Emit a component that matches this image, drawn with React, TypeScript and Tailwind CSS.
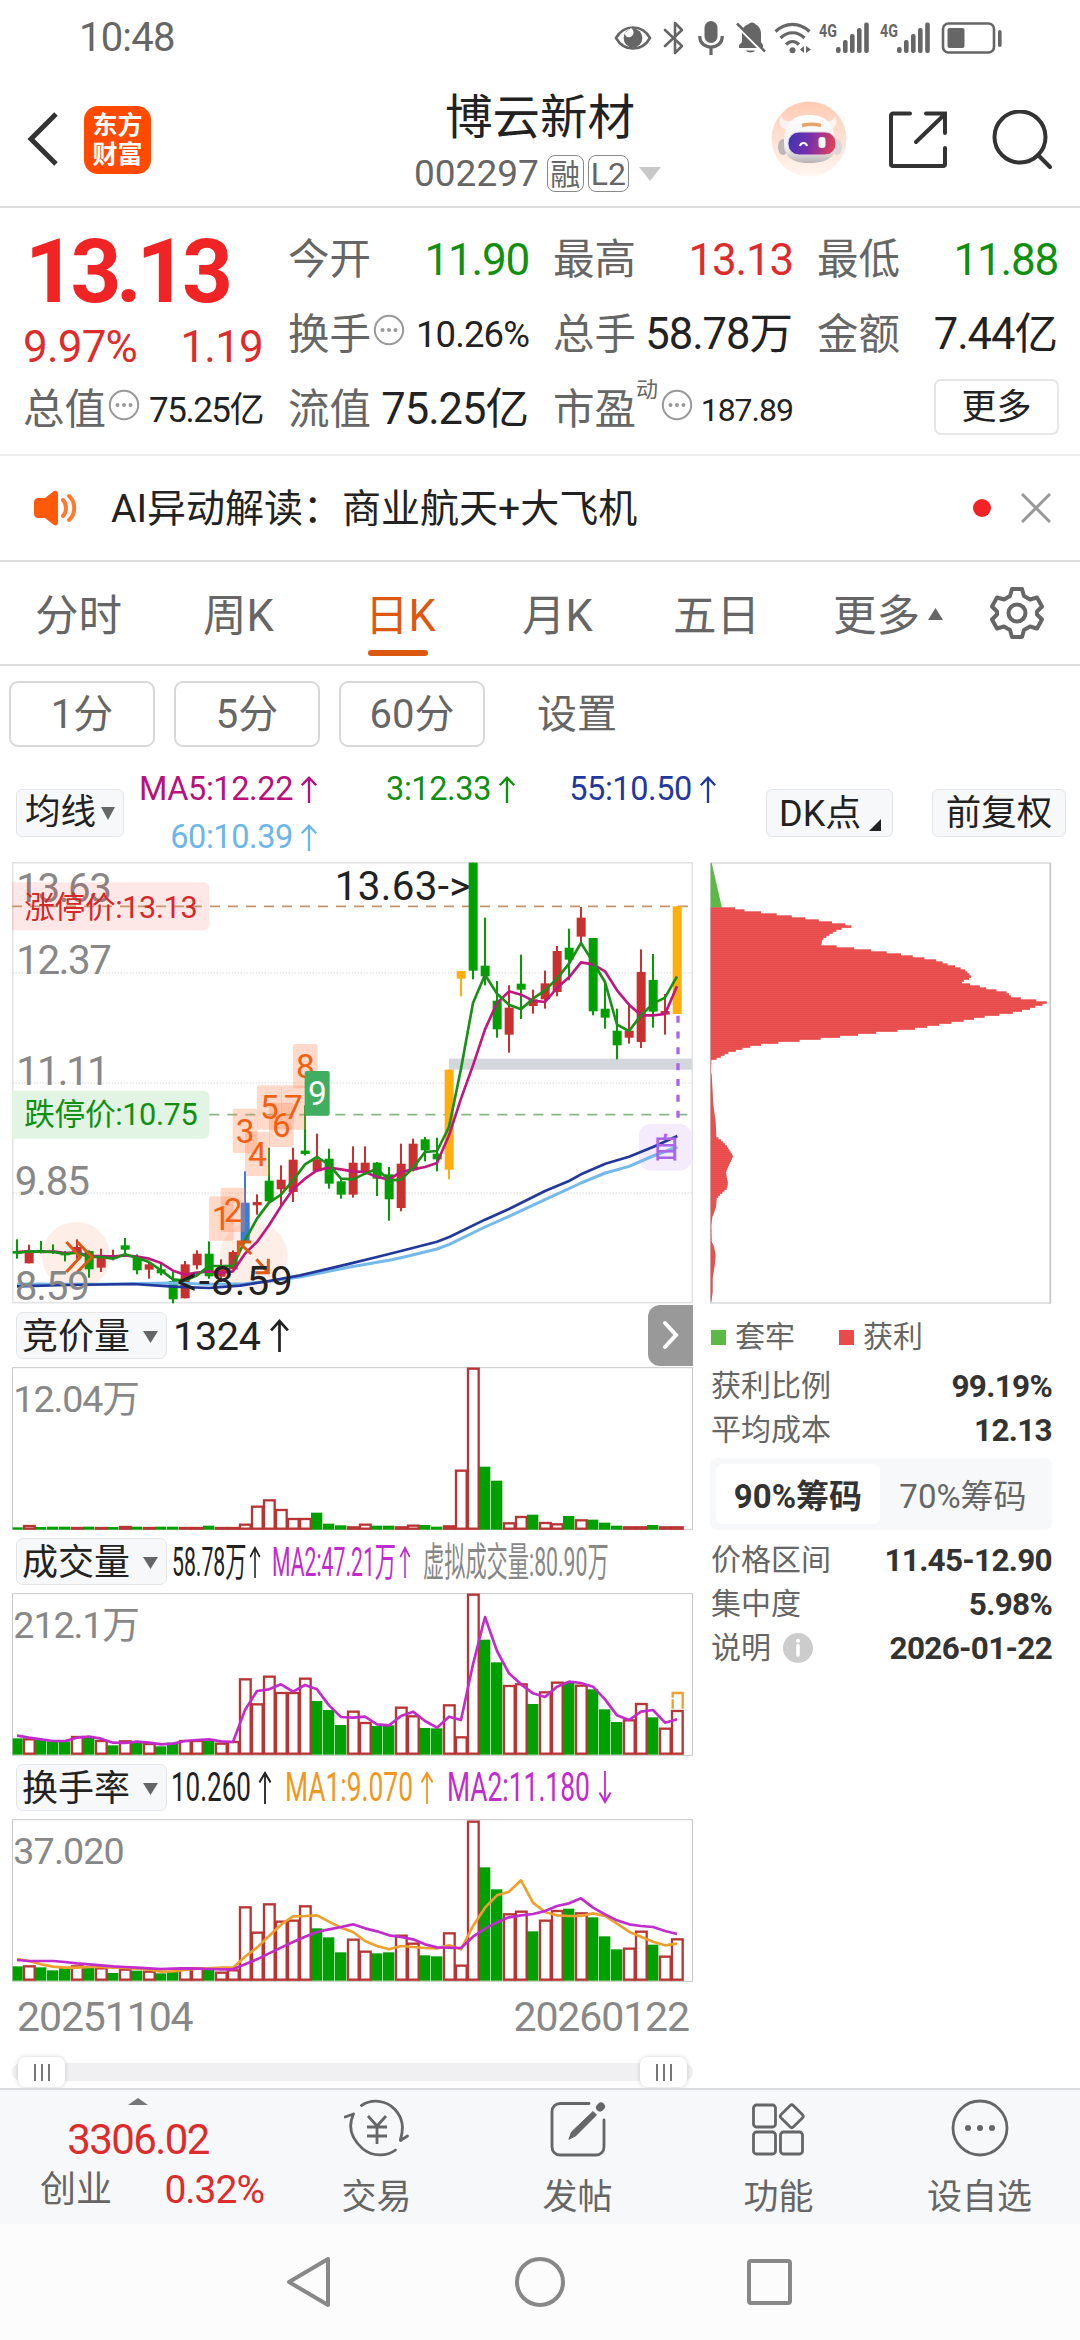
import { FC, ReactNode } from 'react'

import clsx from 'clsx'

// chart geometry is kept in thirds of a pixel, one candle every 36 units
const STEP = 36
const FIRST = 51
const cx = (i: number) => FIRST + i * STEP

const RED = '#c93030'
const GREEN = '#00a000'

type Candle = [kind: string, high: number, top: number, bottom: number, low: number]

const candles: Candle[] = [
  ['g', 1172, 1207, 1215, 1230],
  ['r', 1188, 1207, 1244, 1244],
  ['g', 1177, 1204, 1212, 1214],
  ['g', 1187, 1207, 1212, 1216],
  ['g', 1207, 1212, 1220, 1238],
  ['r', 1172, 1195, 1212, 1230],
  ['g', 1205, 1207, 1262, 1287],
  ['r', 1200, 1225, 1257, 1270],
  ['r', 1203, 1219, 1230, 1235],
  ['g', 1168, 1190, 1203, 1217],
  ['g', 1217, 1222, 1265, 1277],
  ['r', 1240, 1247, 1263, 1290],
  ['g', 1245, 1262, 1274, 1280],
  ['g', 1270, 1297, 1352, 1364],
  ['r', 1237, 1247, 1349, 1349],
  ['r', 1205, 1215, 1250, 1262],
  ['g', 1178, 1215, 1283, 1290],
  ['r', 1232, 1260, 1284, 1300],
  ['r', 1205, 1210, 1262, 1262],
  ['b', 968, 1062, 1180, 1180],
  ['r', 1037, 1060, 1070, 1098],
  ['g', 897, 996, 1058, 1060],
  ['r', 950, 993, 1022, 1073],
  ['r', 897, 933, 1030, 1060],
  ['g', 770, 906, 916, 920],
  ['r', 855, 933, 968, 970],
  ['g', 900, 930, 1005, 1020],
  ['g', 990, 998, 1038, 1050],
  ['r', 893, 942, 1038, 1047],
  ['r', 893, 942, 970, 975],
  ['g', 940, 942, 990, 1042],
  ['g', 955, 977, 1052, 1116],
  ['r', 885, 945, 1078, 1088],
  ['r', 870, 885, 965, 968],
  ['g', 865, 872, 905, 938],
  ['g', 867, 915, 932, 968],
  ['o', 663, 663, 963, 992],
  ['o', 367, 367, 390, 443],
  ['g', 42, 42, 366, 392],
  ['g', 207, 351, 383, 410],
  ['g', 397, 456, 542, 567],
  ['r', 410, 477, 558, 612],
  ['g', 318, 405, 423, 511],
  ['r', 423, 452, 472, 495],
  ['r', 366, 404, 452, 480],
  ['r', 292, 307, 430, 443],
  ['g', 240, 297, 333, 395],
  ['r', 175, 207, 264, 285],
  ['g', 268, 268, 488, 500],
  ['g', 400, 480, 507, 540],
  ['g', 480, 546, 590, 632],
  ['r', 465, 546, 567, 585],
  ['r', 302, 370, 580, 598],
  ['g', 316, 394, 489, 537],
  ['r', 436, 487, 498, 558],
  ['o', 173, 173, 496, 496],
]

const candleColor: Record<string, string> = { g: GREEN, r: RED, b: '#3a7bd5', o: '#ffae0d' }

const ma5 = [
  1210, 1207, 1210, 1208, 1213, 1211, 1222, 1222, 1224, 1220, 1224, 1230, 1243, 1266, 1278, 1272, 1268, 1273, 1268, 1215, 1180, 1130, 1073, 1022, 990,
  965, 957, 962, 968, 970, 985, 992, 970, 962, 955, 943, 860, 750, 650, 542, 463, 428, 438, 456, 460, 418, 386, 341, 347, 368, 425, 468, 500, 500, 496,
  413,
]
const ma3 = [
  1213, 1208, 1209, 1210, 1216, 1212, 1225, 1225, 1230, 1217, 1228, 1240, 1265, 1292, 1296, 1280, 1252, 1252, 1252, 1175, 1110, 1062, 1038, 995, 947,
  925, 948, 990, 992, 975, 960, 995, 993, 958, 910, 907, 835, 660, 463, 378, 435, 468, 482, 450, 425, 390, 345, 283, 340, 400, 528, 547, 500, 465, 447,
  383,
]
const ma55 =
  '51,1313 200,1309 400,1306 519,1314 627,1318 720,1311 807,1297 900,1280 987,1260 1050,1245 1131,1225 1203,1207 1311,1179 1348,1165 1455,1113 1527,1081 1635,1027 1707,997 1743,977 1816,945 1887,924 1959,895 2032,862'
const ma60 =
  '51,1306 303,1307 519,1303 627,1307 735,1305 807,1298 900,1285 1050,1255 1167,1235 1203,1227 1311,1201 1348,1187 1455,1135 1527,1103 1635,1053 1743,1003 1816,973 1887,953 1959,922 2032,895'

const kinds = 'grgggrgrgrgrggrrgrrrrrrrrgggrrggrrggrrrggrrgrrgrgggrrgrr'

const auction = [
  684, 677, 683, 682, 682, 683, 682, 683, 683, 680, 682, 683, 682, 682, 683, 683, 679, 683, 683, 673, 619, 600, 629, 656, 656, 640, 673, 678, 681, 673,
  679, 679, 681, 676, 677, 682, 678, 511, 205, 502, 544, 669, 650, 646, 668, 672, 650, 660, 661, 670, 679, 681, 681, 677, 681, 681,
]
const volume = [
  1317, 1317, 1320, 1326, 1326, 1310, 1314, 1322, 1338, 1323, 1329, 1331, 1341, 1330, 1322, 1322, 1322, 1330, 1325, 1137, 1212, 1129, 1178, 1178, 1135,
  1205, 1232, 1277, 1234, 1268, 1280, 1278, 1222, 1248, 1286, 1287, 1215, 1311, 883, 1021, 1089, 1157, 1152, 1214, 1176, 1147, 1148, 1156, 1170, 1230,
  1268, 1260, 1211, 1254, 1285, 1232,
]
const volumeMa2 = [
  1309, 1315, 1320, 1325, 1325, 1315, 1312, 1318, 1330, 1331, 1327, 1330, 1335, 1333, 1325, 1322, 1320, 1326, 1328, 1232, 1175, 1170, 1155, 1177, 1157,
  1170, 1218, 1253, 1255, 1252, 1275, 1278, 1250, 1237, 1265, 1285, 1252, 1262, 1095, 953, 1055, 1122, 1155, 1182, 1193, 1162, 1147, 1151, 1162, 1200,
  1248, 1262, 1237, 1232, 1270, 1260,
]
const turnover = [
  651, 648, 654, 663, 656, 648, 652, 654, 671, 658, 664, 664, 672, 667, 654, 654, 655, 667, 660, 471, 547, 462, 514, 511, 468, 537, 564, 609, 568, 604,
  612, 609, 556, 580, 618, 621, 549, 646, 214, 354, 420, 492, 484, 546, 511, 482, 478, 489, 504, 561, 600, 595, 544, 586, 619, 567,
]
const turnoverMa1 = [
  629, 635, 645, 652, 655, 655, 653, 653, 655, 656, 658, 660, 667, 666, 662, 658, 657, 655, 655, 622, 595, 560, 526, 501, 500, 498, 517, 535, 548, 575,
  590, 600, 590, 593, 596, 597, 588, 600, 530, 475, 438, 427, 393, 460, 488, 498, 500, 500, 492, 500, 523, 547, 562, 577, 588, 583,
]
const turnoverMa2 = [
  632, 635, 635, 635, 638, 642, 645, 648, 651, 653, 655, 657, 659, 658, 657, 658, 659, 660, 660, 645, 630, 612, 595, 578, 562, 548, 540, 533, 525, 537,
  546, 558, 563, 570, 585, 594, 595, 596, 562, 538, 519, 504, 498, 494, 485, 470, 462, 447, 475, 495, 513, 525, 530, 533, 545, 554,
]

// [y, x] outline of the cost distribution
const chips = [
  [176, 95], [180, 135], [188, 173], [192, 213], [197, 252], [202, 292], [208, 332], [214, 373], [220, 413], [226, 452], [232, 494], [241, 450],
  [248, 435], [260, 415], [272, 397], [288, 394], [292, 425], [298, 470], [302, 515], [309, 565], [315, 615], [320, 645], [326, 680], [332, 715],
  [338, 750], [346, 765], [354, 795], [364, 823], [374, 835], [384, 843], [392, 835], [400, 808], [405, 828], [410, 848], [416, 880], [424, 897],
  [428, 942], [436, 957], [442, 957], [448, 975], [452, 1010], [457, 1046], [464, 1080], [470, 1046], [480, 1020], [490, 980], [496, 945], [502, 895],
  [508, 862], [515, 827], [520, 797], [526, 760], [532, 723], [538, 687], [544, 650], [548, 595], [554, 540], [560, 486], [566, 432], [572, 372],
  [577, 318], [582, 265], [588, 213], [596, 170], [604, 145], [612, 115], [620, 100], [628, 85], [636, 64], [670, 63], [680, 65], [770, 70],
  [820, 77], [865, 79], [880, 98], [895, 112], [923, 129], [945, 119], [970, 108], [985, 110], [1005, 114], [1020, 110], [1040, 88], [1050, 80],
  [1075, 78], [1105, 67], [1130, 64], [1180, 65], [1195, 72], [1220, 77], [1250, 74], [1290, 68], [1330, 68], [1360, 64],
]

const toPoints = (values: number[]) => values.map((v, i) => `${cx(i)},${v}`).join(' ')

const marks = [
  { n: '1', x: 627, y: 1043 },
  { n: '2', x: 662, y: 1017 },
  { n: '3', x: 698, y: 780 },
  { n: '4', x: 735, y: 849 },
  { n: '5', x: 771, y: 710 },
  { n: '6', x: 807, y: 762 },
  { n: '7', x: 843, y: 710 },
  { n: '8', x: 879, y: 586 },
]

const Arrow: FC<{ className?: string; down?: boolean }> = ({ className, down }) => (
  <svg viewBox="0 0 20 32" preserveAspectRatio="none" className={clsx('shrink-0', down && 'rotate-180', className)} fill="none" stroke="currentColor" strokeWidth="2.6">
    <path d="M10 32V2M2 11l8-9 8 9" />
  </svg>
)

const Caret: FC<{ className?: string }> = ({ className }) => (
  <svg viewBox="0 0 16 13" preserveAspectRatio="none" className={clsx('shrink-0 fill-current', className)}>
    <path d="M0 0h16L8 13z" />
  </svg>
)

const More: FC<{ className?: string }> = ({ className }) => (
  <svg viewBox="0 0 32 32" className={clsx('h-8 w-8 shrink-0 text-[#999]', className)}>
    <circle cx="16" cy="16" r="14.2" fill="none" stroke="currentColor" strokeWidth="2" />
    <circle cx="9.5" cy="16" r="2" fill="currentColor" />
    <circle cx="16" cy="16" r="2" fill="currentColor" />
    <circle cx="22.5" cy="16" r="2" fill="currentColor" />
  </svg>
)

const Signal: FC = () => (
  <div className="flex text-[#666]">
    <span className="w-[17px] origin-left scale-x-75 text-[19px] leading-none font-bold">4G</span>
    <svg viewBox="0 0 33 32" className="mt-px h-8 w-[33px] fill-current">
      <rect x="0" y="25" width="4.6" height="6" rx="2" />
      <rect x="7" y="18" width="4.6" height="13" rx="2" />
      <rect x="14" y="12" width="4.6" height="19" rx="2" />
      <rect x="21" y="6" width="4.6" height="25" rx="2" />
      <rect x="28.2" y="0.5" width="4.6" height="30.5" rx="2" />
    </svg>
  </div>
)

const StatusBar: FC = () => (
  <div className="flex h-[76px] items-center pl-[79px] text-[#666]">
    <span className="w-[535px] text-[40px] tracking-[-0.8px]">10:48</span>
    <svg viewBox="0 0 38 26" className="h-[26px] w-[38px]">
      <path d="M2 13C10-1 28-1 36 13 28 27 10 27 2 13z" fill="none" stroke="currentColor" strokeWidth="2.6" />
      <circle cx="19" cy="13" r="9.4" fill="currentColor" />
      <path d="M17 3c4 3 3 8-1 9s-5-2-5-4" fill="#fff" />
    </svg>
    <svg viewBox="0 0 22 34" className="ml-[11px] h-[34px] w-[22px]" fill="none" stroke="currentColor" strokeWidth="2.6" strokeLinejoin="round" strokeLinecap="round">
      <path d="M2 9l17 16-7 7V2l7 7L2 25" />
    </svg>
    <svg viewBox="0 0 26 34" className="ml-[13px] h-[34px] w-[26px]">
      <rect x="6.5" y="0" width="13" height="22" rx="6.5" fill="currentColor" />
      <path d="M1.8 15v1c0 6 5 10 11.2 10s11.2-4 11.2-10v-1M13 26v8" fill="none" stroke="currentColor" strokeWidth="3.2" />
    </svg>
    <svg viewBox="0 0 30 32" className="ml-[12px] h-[32px] w-[30px]">
      <path d="M3 26V23l3-3v-9C6 6 9 3 13 2c1-2 5-2 6 0 4 2 6 5 6 10v8l2 3v3z" fill="currentColor" />
      <path d="M10 28.5h9c-1 2.5-8 2.5-9 0z" fill="currentColor" />
      <path d="M-1 1.5L28 31" stroke="#fff" strokeWidth="3" />
      <path d="M1 1.5L29 29.5" stroke="currentColor" strokeWidth="2.6" />
    </svg>
    <svg viewBox="0 0 40 32" className="ml-[8px] h-[32px] w-[40px]" fill="none" stroke="currentColor" strokeWidth="3.2">
      <path d="M1.5 9.5c10-9.5 24-9.5 34 0M6.5 16c7-7 17-7 24 0M12 22.5c4-4 9-4 13 0" />
      <circle cx="18.5" cy="28.3" r="3" fill="currentColor" stroke="none" />
      <path d="M30 24v7l-4-3.5zM32 24v7l5-3.5z" fill="currentColor" stroke="none" />
    </svg>
    <div className="ml-[5px] flex gap-[11px]">
      <Signal />
      <Signal />
    </div>
    <svg viewBox="0 0 62 34" className="ml-[11px] h-[34px] w-[62px]">
      <rect x="2" y="2.5" width="51" height="29" rx="5.5" fill="none" stroke="currentColor" strokeWidth="2.6" />
      <rect x="6.5" y="7" width="17" height="20" rx="2" fill="currentColor" />
      <rect x="57" y="9" width="3.6" height="17" rx="1.8" fill="currentColor" />
    </svg>
  </div>
)

const Robot: FC = () => (
  <svg viewBox="0 0 76 76" className="h-[76px] w-[76px]">
    <defs>
      <linearGradient id="halo" x1="0" y1="0" x2="0" y2="1">
        <stop offset="0" stopColor="#ffcbb3" />
        <stop offset="1" stopColor="#fff6f1" />
      </linearGradient>
      <linearGradient id="visor" x1="0" y1="0" x2="1" y2="0.1">
        <stop offset="0" stopColor="#3a35b8" />
        <stop offset="0.5" stopColor="#7a2fa8" />
        <stop offset="1" stopColor="#e0405c" />
      </linearGradient>
      <linearGradient id="shell" x1="0" y1="0" x2="0" y2="1">
        <stop offset="0" stopColor="#ffffff" />
        <stop offset="0.7" stopColor="#f1eeee" />
        <stop offset="1" stopColor="#b9b2b4" />
      </linearGradient>
    </defs>
    <circle cx="38" cy="38" r="37.5" fill="url(#halo)" />
    <path d="M16 29C8 27 7 20 10 15c2 5 6 6 11 5zM58 29c8-2 9-9 6-14-2 5-6 6-11 5z" fill="#f9f2ef" />
    <ellipse cx="12" cy="46" rx="5" ry="8" fill="#bdb7ba" />
    <ellipse cx="66" cy="46" rx="5" ry="8" fill="#dcd7d8" />
    <path d="M13 42C13 22 22 14 38 14s25 8 27 28c1 14-9 20-27 20S13 55 13 42z" fill="url(#shell)" />
    <path d="M31 24.500c6-1.500 13-1.500 19 0" fill="none" stroke="#e8a468" strokeWidth="3.5" />
    <rect x="17" y="31" width="48" height="23" rx="11" fill="url(#visor)" stroke="#dcd4dc" strokeWidth="1" />
    <path d="M29 45c1-4 6-4 7 0" fill="none" stroke="#fff" strokeWidth="2.2" />
    <rect x="47.5" y="36" width="7" height="11" rx="3" fill="#fff" />
  </svg>
)

const Header: FC = () => (
  <div className="flex h-[132px] border-b-2 border-[#dcdcdc]">
    <div className="flex w-[360px] items-start pl-[26px]">
      <svg viewBox="0 0 34 56" className="mt-[35px] h-[56px] w-[34px]" fill="none" stroke="#333" strokeWidth="5">
        <path d="M30 3L5 28l25 25" />
      </svg>
      <div className="mt-[30px] ml-[24px] flex h-[68px] w-[67px] flex-col items-center justify-center rounded-[14px] bg-[#ff4a00] text-[25px] leading-[29px] font-bold text-white">
        <span>东方</span>
        <span>财富</span>
      </div>
    </div>
    <div className="flex w-[360px] flex-col items-center">
      <h1 className="mt-[15px] h-[54px] text-[47.5px] leading-[54px] text-[#222]">博云新材</h1>
      <div className="mt-[10px] flex items-center gap-1 self-start pl-[54px] text-[#666]">
        <span className="mr-[4px] text-[37px] leading-[38px]">002297</span>
        <span className="flex h-[37px] w-[37px] items-center justify-center rounded-[8px] border border-[#888] pt-[2px] text-[30px] leading-none">融</span>
        <span className="flex h-[37px] w-[41px] items-center justify-center rounded-[8px] border border-[#888] text-[32px] leading-none">L2</span>
        <Caret className="ml-[6px] h-[14px] w-[22px] text-[#c8c8c8]" />
      </div>
    </div>
    <div className="flex">
      <div className="mt-[25px] ml-[51px]">
        <Robot />
      </div>
      <svg viewBox="0 0 60 60" className="mt-[34px] ml-[41px] h-[60px] w-[60px]" fill="none" stroke="#333" strokeWidth="4" strokeLinecap="round">
        <path d="M22 3.5H5a2 2 0 0 0-2 2V54a2 2 0 0 0 2 2h50a2 2 0 0 0 2-2V38M38 3.5h19V23M56 5L28 32" />
      </svg>
      <svg viewBox="0 0 60 60" className="mt-[34px] ml-[42px] h-[60px] w-[62px]" fill="none" stroke="#333" strokeWidth="4" strokeLinecap="round">
        <circle cx="29" cy="27" r="25.5" />
        <path d="M47 45l12 12" />
      </svg>
    </div>
  </div>
)

interface QuoteCellProps {
  label: string
  value: ReactNode
  valueClass?: string
  info?: boolean
  sup?: string
}

const QuoteCell: FC<QuoteCellProps> = ({ label, value, valueClass, info, sup }) => (
  <div className="flex h-[75px] items-center">
    <span className="-ml-[2px] text-[41.5px] leading-none text-[#666]">{label}</span>
    {sup && <span className="-mt-[40px] w-[23px] shrink-0 text-[22px] leading-none text-[#666]">{sup}</span>}
    {info && <More className="-mt-[11px] ml-[2px]" />}
    <span className={clsx('ml-auto leading-none whitespace-nowrap', valueClass)}>{value}</span>
  </div>
)

const Quote: FC = () => (
  <div className="flex h-[249px] gap-[27px] border-b-2 border-[#eee] pl-[25px]">
    <div className="flex w-[238px] flex-col">
      <div className="h-[99px] pt-[18px] pl-[0px] text-[89px] leading-[92px] font-bold tracking-[-5.5px] text-[#f02424]">13.13</div>
      <div className="-ml-[2px] flex h-[65px] items-end justify-between text-[44px] leading-[50px] tracking-[-0.8px] text-[#dd2c2c]">
        <span>9.97%</span>
        <span>1.19</span>
      </div>
      <div className="mt-px">
        <QuoteCell label="总值" info value="75.25亿" valueClass="text-[35px] tracking-[-1.5px] text-[#222]" />
      </div>
    </div>
    <div className="w-[238px] pt-[15px]">
      <QuoteCell label="今开" value="11.90" valueClass="-mr-[1px] text-[44px] tracking-[-1.2px] text-[#109010]" />
      <QuoteCell label="换手" info value="10.26%" valueClass="-mr-[1px] text-[36.5px] tracking-[-0.9px] text-[#222]" />
      <QuoteCell label="流值" value="75.25亿" valueClass="text-[43.5px] tracking-[-1px] text-[#222]" />
    </div>
    <div className="w-[237px] pt-[15px]">
      <QuoteCell label="最高" value="13.13" valueClass="-mr-[1px] text-[44px] tracking-[-1.2px] text-[#dd2c2c]" />
      <QuoteCell label="总手" value="58.78万" valueClass="text-[43.5px] tracking-[-1px] text-[#222]" />
      <QuoteCell label="市盈" sup="动" info value="187.89" valueClass="-mr-[1px] text-[32px] tracking-[-1px] text-[#222]" />
    </div>
    <div className="w-[238px] pt-[15px]">
      <QuoteCell label="最低" value="11.88" valueClass="-mr-[1px] text-[44px] tracking-[-1.2px] text-[#109010]" />
      <QuoteCell label="金额" value="7.44亿" valueClass="text-[43.5px] tracking-[-1px] text-[#222]" />
      <div className="-mt-[3px] flex h-[75px] items-center justify-end">
        <button className="-mr-[2px] h-[56px] w-[125px] rounded-[7px] border-2 border-[#e6e6e6] pt-[1px] text-[35px] leading-none text-[#222]">更多</button>
      </div>
    </div>
  </div>
)

const Notice: FC = () => (
  <div className="flex h-[106px] items-center border-b-2 border-[#dcdcdc] pl-[32px]">
    <svg viewBox="0 0 48 38" className="h-[38px] w-[48px]">
      <path d="M2 14c0-4 2-5 5-5h6l9-7c2-1 4 0 4 3v28c0 3-2 4-4 3l-9-7H7c-3 0-5-1-5-5z" fill="#ff5a0a" />
      <path d="M31 11c4 4 4 12 0 16M37 7c7 6 7 18 0 24" fill="none" stroke="#ff7a30" strokeWidth="4" strokeLinecap="round" />
    </svg>
    <span className="mt-[2px] ml-[31px] text-[39px] leading-none whitespace-nowrap text-[#222]">AI异动解读：商业航天+大飞机</span>
    <span className="ml-auto h-[18px] w-[18px] rounded-full bg-[#f02424]" />
    <svg viewBox="0 0 30 30" className="mr-[29px] ml-[30px] h-[30px] w-[30px]" stroke="#999" strokeWidth="3">
      <path d="M1 1l28 28M29 1L1 29" />
    </svg>
  </div>
)

const periods = [
  { label: '分时', box: 'ml-[35px] w-[168px]' },
  { label: '周K', box: 'w-[162px]' },
  { label: '日K', box: 'w-[157px]', active: true },
  { label: '月K', box: 'w-[151px]' },
  { label: '五日', box: 'w-[160px]' },
]

const Periods: FC = () => (
  <div className="flex h-[104px] border-b-2 border-[#dcdcdc] text-[43.5px] leading-none text-[#666]">
    {periods.map((p) => (
      <div key={p.label} className={clsx('flex flex-col items-start pt-[33px]', p.box)}>
        <div className={clsx('flex flex-col items-center', p.active && 'text-[#dd5810]')}>
          {p.label}
          {p.active && <div className="mt-[12px] -ml-[5px] h-[6px] w-[60px] rounded-full bg-[#dd5810]" />}
        </div>
      </div>
    ))}
    <span className="pt-[33px] whitespace-nowrap">更多</span>
    <Caret className="mt-[46px] ml-[8px] h-[12px] w-[15px] rotate-180" />
    <svg viewBox="0 0 54 54" className="mt-[24px] ml-[47px] h-[54px] w-[54px]" fill="none" stroke="currentColor" strokeWidth="4" strokeLinejoin="round">
      <path d="M22 3h10l2 7 6 3.5 7-2 5 9-5 5v3l5 5-5 9-7-2-6 3.5-2 7H22l-2-7-6-3.5-7 2-5-9 5-5v-3l-5-5 5-9 7 2 6-3.5z" />
      <circle cx="27" cy="27" r="8.5" />
    </svg>
  </div>
)

const Minutes: FC = () => (
  <div className="flex h-[81px] items-end gap-[19px] pl-[9px] text-[40px] leading-none text-[#666]">
    {['1分', '5分', '60分'].map((m) => (
      <div key={m} className="flex h-[66px] w-[146px] items-center justify-center rounded-[9px] border-2 border-[#d8d8d8] pt-[3px]">
        {m}
      </div>
    ))}
    <div className="flex h-[66px] items-center pt-[3px] pl-[33px]">设置</div>
  </div>
)

const Average: FC<{ text: string; color: string }> = ({ text, color }) => (
  <div className={clsx('flex h-[48px] items-center justify-end gap-[7px] text-[32.5px] leading-none tracking-[-0.4px] whitespace-nowrap', color)}>
    {text}
    <Arrow className="h-[27px] w-[18px]" />
  </div>
)

const Averages: FC = () => (
  <div className="flex h-[116px] pl-[16px] text-[#222]">
    <div className="mt-[42px] flex h-[48px] w-[108px] items-center justify-between rounded-[6px] border border-[#e3e5e9] bg-[#f7f8fa] px-[8px] pt-px text-[35.5px] leading-none">
      均线
      <Caret className="h-[13px] w-[14px] text-[#666]" />
    </div>
    <div className="w-[194px] pt-[19px]">
      <Average text="MA5:12.22" color="text-[#b8107c]" />
      <Average text="60:10.39" color="text-[#6cb6ea]" />
    </div>
    <div className="w-[198px] pt-[19px]">
      <Average text="3:12.33" color="text-[#109010]" />
    </div>
    <div className="w-[201px] pt-[19px]">
      <Average text="55:10.50" color="text-[#22389c]" />
    </div>
    <div className="mt-[42px] ml-[49px] flex h-[48px] w-[127px] items-end rounded-[6px] border border-[#e3e5e9] bg-[#f7f8fa] pl-[12px] text-[36px] leading-none">
      <span className="mb-[4px]">DK点</span>
      <svg viewBox="0 0 12 12" className="mb-[5px] ml-[8px] h-[12px] w-[12px] fill-[#222]">
        <path d="M12 0v12H0z" />
      </svg>
    </div>
    <div className="mt-[42px] ml-[39px] flex h-[48px] w-[134px] items-center justify-center rounded-[6px] border border-[#e3e5e9] bg-[#f7f8fa] pt-[2px] text-[35.5px] leading-none">
      前复权
    </div>
  </div>
)

const KLine: FC = () => (
  <svg viewBox="36 40 2043 1326" className="block h-[442px] w-[681px]">
    <rect x="38" y="42" width="2039" height="1320" fill="none" stroke="#e2e2e2" strokeWidth="5" />
    {[373, 703, 1033].map((y) => (
      <line key={y} x1="38" x2="2076" y1={y} y2={y} stroke="#c4c4c4" strokeWidth="3" strokeDasharray="3 6" />
    ))}
    <rect x="1347" y="630" width="729" height="33" fill="#d3d6db" />
    <text x="49" y="161" textLength="287" fill="#888" fontSize="121">
      13.63
    </text>
    <path d="M36 101H610a18 18 0 0 1 18 18V227a18 18 0 0 1-18 18H36z" fill="#f02424" fillOpacity="0.11" />
    <path d="M36 726H610a18 18 0 0 1 18 18V852a18 18 0 0 1-18 18H36z" fill="#e2f4e3" />
    <line x1="36" x2="2076" y1="173" y2="173" stroke="#c4946c" strokeWidth="5" strokeDasharray="30 24" />
    <line x1="628" x2="2076" y1="798" y2="798" stroke="#86b886" strokeWidth="5" strokeDasharray="30 24" />
    <g fontSize="92">
      <text x="73" y="208" fill="#d62828" textLength="520">
        涨停价:13.13
      </text>
      <text x="73" y="830" fill="#109010" textLength="520">
        跌停价:10.75
      </text>
    </g>
    <circle cx="228" cy="1222" r="102" fill="#fdede4" fillOpacity="0.9" />
    <circle cx="761" cy="1222" r="102" fill="#fdede4" fillOpacity="0.9" />
    <rect x="1917" y="826" width="158" height="140" rx="36" fill="#f4ebfd" />
    {candles.map(([kind, high, top, bottom, low], i) => (
      <g key={i} fill={candleColor[kind]}>
        <rect x={cx(i) - 3} y={high} width="6" height={low - high} />
        <rect x={cx(i) - 13} y={top} width="27" height={bottom - top} />
      </g>
    ))}
    {marks.map((m) => (
      <rect key={m.n} x={m.x} y={m.y} width="74" height="133" rx="6" fill="#ff8a58" fillOpacity="0.32" />
    ))}
    <g fontSize="100" fill="#f06010" textAnchor="middle">
      {marks.map((m) => (
        <text key={m.n} x={m.x + 37} y={m.y + 102}>
          {m.n}
        </text>
      ))}
      <rect x="914" y="667" width="75" height="134" rx="6" fill="#3fae60" />
      <text x="952" y="770" fill="#fff">
        9
      </text>
    </g>
    <g fill="none" strokeWidth="8" strokeLinejoin="round">
      <polyline points={ma60} stroke="#74b9ea" strokeWidth="9" />
      <polyline points={ma55} stroke="#22389c" />
      <polyline points={toPoints(ma5)} stroke="#c01880" />
      <polyline points={toPoints(ma3)} stroke="#1a9018" />
    </g>
    <g fill="none" stroke="#dd5810" strokeWidth="9">
      <path d="M199 1180l42 45-42 45M232 1180l44 45-44 45" />
      <path d="M754 1180h-39v40M717 1182l37 34M766 1272h39v-42M803 1270l-34-38" />
    </g>
    <g fill="#888" fontSize="121">
      <text x="49" y="376" textLength="287">
        12.37
      </text>
      <text x="49" y="708" textLength="280">
        11.11
      </text>
      <text x="44" y="1039" textLength="226">
        9.85
      </text>
      <text x="44" y="1355" textLength="226">
        8.59
      </text>
    </g>
    <line x1="2034" x2="2034" y1="501" y2="812" stroke="#a964e8" strokeWidth="10" strokeDasharray="21 26.5" />
    <text x="1998" y="929" textAnchor="middle" fontSize="84" fontWeight="500" fill="#a964e8">
      自
    </text>
    <g fill="#222" fontSize="121">
      <text x="531" y="1340" textLength="348">
        &lt;-8.59
      </text>
      <text x="1004" y="154" textLength="407">
        13.63-&gt;
      </text>
    </g>
  </svg>
)

interface BarChartProps {
  top: number
  base: number
  values: number[]
  label: string
  labelWidth: number
  lines?: { values: number[]; color: string }[]
  children?: ReactNode
}

const BarChart: FC<BarChartProps> = ({ top, base, values, label, labelWidth, lines = [], children }) => (
  <svg viewBox={`36 ${top - 2} 2043 489`} className="block h-[163px] w-[681px]">
    <rect x="37.5" y={top} width="2040" height="485" fill="none" stroke="#c8c8c8" strokeWidth="3" />
    <text x="40" y={top + 134} fill="#888" fontSize="113" textLength={labelWidth}>
      {label}
    </text>
    {values.map((v, i) =>
      kinds[i] === 'g' ? (
        <rect key={i} x={Math.max(cx(i) - 18, 38)} y={v} width={i === 0 ? 30 : 34} height={base - v} fill={GREEN} />
      ) : (
        <rect key={i} x={cx(i) - 15} y={v + 3} width="32" height={Math.max(base - v - 6, 2)} fill="#fff" stroke="#b93434" strokeWidth="7" />
      ),
    )}
    {children}
    {lines.map((line) => (
      <polyline key={line.color} points={toPoints(line.values)} fill="none" stroke={line.color} strokeWidth="8" strokeLinejoin="round" />
    ))}
  </svg>
)

const IndicatorRow: FC<{ name: string; className?: string; children: ReactNode }> = ({ name, className, children }) => (
  <div className={clsx('flex items-center pl-[4px] text-[#222]', className)}>
    <div className="flex h-[47px] w-[151px] shrink-0 items-center justify-between rounded-[7px] border border-[#e3e5e9] bg-[#f7f8fa] pt-[2px] pr-[8px] pl-[5px] text-[36px] leading-none">
      {name}
      <Caret className="h-[12px] w-[15px] text-[#666]" />
    </div>
    {children}
  </div>
)

const Handle: FC = () => (
  <div className="flex h-[30px] w-[47px] items-center justify-center gap-[5px] rounded-[8px] bg-white shadow-[0_0_5px_rgba(0,0,0,0.18)]">
    <div className="h-[17px] w-[2px] bg-[#777]" />
    <div className="h-[17px] w-[2px] bg-[#777]" />
    <div className="h-[17px] w-[2px] bg-[#777]" />
  </div>
)

const Charts: FC = () => (
  <div className="w-[681px]">
    <KLine />
    <IndicatorRow name="竞价量" className="h-[63px]">
      <span className="mt-px ml-[6px] text-[39.5px] leading-none tracking-[-0.3px]">1324</span>
      <Arrow className="ml-[8px] h-[33px] w-[21px]" />
      <div className="mt-[-1px] ml-auto flex h-[61px] w-[45px] items-center justify-center rounded-l-[12px] bg-[#999]">
        <svg viewBox="0 0 18 30" className="h-[30px] w-[18px]" fill="none" stroke="#fff" strokeWidth="4" strokeLinecap="round">
          <path d="M3 3l11 12L3 27" />
        </svg>
      </div>
    </IndicatorRow>
    <BarChart top={205} base={691} values={auction} label="12.04万" labelWidth={380} />
    <IndicatorRow name="成交量" className="h-[63px] text-[40px] leading-none whitespace-nowrap">
      <span className="mt-[2px] ml-[5px] w-[77px] origin-left scale-x-[0.53]">58.78万</span>
      <Arrow className="h-[32px] w-[12px]" />
      <span className="mt-[2px] ml-[11px] w-[127px] origin-left scale-x-[0.53] text-[#c22ccc]">MA2:47.21万</span>
      <Arrow className="h-[32px] w-[12px] text-[#c22ccc]" />
      <span className="mt-[2px] ml-[12px] w-[180px] origin-left scale-x-[0.53] text-[#888]">虚拟成交量:80.90万</span>
    </IndicatorRow>
    <BarChart top={883} base={1366} values={volume} label="212.1万" labelWidth={380} lines={[{ values: volumeMa2, color: '#c22ccc' }]}>
      <path d="M2018 1228V1181H2048V1228" fill="none" stroke="#eda02c" strokeWidth="7" strokeDasharray="28 5 200" />
    </BarChart>
    <IndicatorRow name="换手率" className="h-[63px] text-[40px] leading-none whitespace-nowrap">
      <span className="mt-px ml-[4px] w-[87px] origin-left scale-x-[0.65]">10.260</span>
      <Arrow className="h-[33px] w-[14px]" />
      <span className="mt-px ml-[13px] w-[135px] origin-left scale-x-[0.66] text-[#f0981e]">MA1:9.070</span>
      <Arrow className="h-[33px] w-[14px] text-[#f0981e]" />
      <span className="mt-px ml-[13px] w-[151px] origin-left scale-x-[0.66] text-[#c22ccc]">MA2:11.180</span>
      <Arrow down className="h-[33px] w-[14px] text-[#c22ccc]" />
    </IndicatorRow>
    <BarChart
      top={211}
      base={694}
      values={turnover}
      label="37.020"
      labelWidth={334}
      lines={[
        { values: turnoverMa1, color: '#eda02c' },
        { values: turnoverMa2, color: '#c22ccc' },
      ]}
    />
    <div className="flex h-[68px] items-center justify-between pt-[2px] pr-[4px] pl-[5px] text-[41px] leading-none tracking-[-1.1px] text-[#888]">
      <span>20251104</span>
      <span>20260122</span>
    </div>
    <div className="mt-[13px] flex h-[18px] items-center justify-between rounded-full bg-[#f0f0f3] px-[6px]">
      <Handle />
      <Handle />
    </div>
  </div>
)

const chipWidth = (y: number) => {
  const k = chips.findIndex(([cy]) => cy >= y)
  if (k <= 0) return chips[0][1]
  const [y0, x0] = chips[k - 1]
  const [y1, x1] = chips[k]
  return x0 + ((x1 - x0) * (y - y0)) / (y1 - y0)
}

const chipRows = Array.from({ length: 197 }, (_, i) => 177 + i * 6)

const StatRow: FC<{ label: ReactNode; value: string }> = ({ label, value }) => (
  <div className="flex h-[44px] items-center justify-between pl-px text-[30px] leading-none text-[#666]">
    <div className="flex items-center gap-[12px]">{label}</div>
    <span className="text-[31.5px] font-bold tracking-[-0.7px] text-[#333]">{value}</span>
  </div>
)

const Chips: FC = () => (
  <div className="ml-[17px] w-[342px]">
    <svg viewBox="60 40 1026 1326" className="block h-[442px] w-[342px]">
      <path d="M62 43H1081M62 1363H1081M62 42V1365" stroke="#c8c8c8" strokeWidth="3" />
      <path d="M1081 42V1365" stroke="#c8c8c8" strokeWidth="5" />
      <path d="M62 42h3L96 177H62z" fill="#5cb946" />
      <g fill="#e94a4a">
        {chipRows.map((y) => (
          <rect key={y} x="62" y={y - 1} width={Math.max(chipWidth(y + 3) - 62, 1)} height="7.5" />
        ))}
      </g>
    </svg>
    <div className="flex h-[59px] items-center pt-[7px] pl-px text-[30px] leading-none text-[#666]">
      <div className="mr-[9px] h-[15px] w-[15px] bg-[#5cb946]" />
      套牢
      <div className="mr-[9px] ml-[44px] h-[15px] w-[15px] bg-[#e94a4a]" />
      获利
    </div>
    <div className="pt-px">
      <StatRow label="获利比例" value="99.19%" />
      <StatRow label="平均成本" value="12.13" />
    </div>
    <div className="mt-[6px] mb-[8px] flex h-[72px] items-center rounded-[7px] bg-[#f7f8fa] px-[6px] text-[33px] leading-none whitespace-nowrap">
      <div className="flex h-[60px] w-[164px] items-center justify-center rounded-[7px] bg-white pt-[4px] font-bold text-[#333]">90%筹码</div>
      <div className="flex flex-1 items-center justify-center pt-[4px] text-[#666]">70%筹码</div>
    </div>
    <StatRow label="价格区间" value="11.45-12.90" />
    <StatRow label="集中度" value="5.98%" />
    <StatRow
      label={
        <>
          说明
          <svg viewBox="0 0 30 30" className="h-[30px] w-[30px]">
            <circle cx="15" cy="15" r="15" fill="#ccc" />
            <path d="M15 12.5v9.5" stroke="#fff" strokeWidth="3.5" strokeLinecap="round" />
            <circle cx="15" cy="7.8" r="2" fill="#fff" />
          </svg>
        </>
      }
      value="2026-01-22"
    />
  </div>
)

const Action: FC<{ label: string; children: ReactNode }> = ({ label, children }) => (
  <div className="flex w-[201px] flex-col items-center pt-[6px] text-[#666]">
    <svg viewBox="0 0 66 66" className="h-[66px] w-[66px]" fill="none" stroke="currentColor" strokeWidth="2.8" strokeLinecap="round" strokeLinejoin="round">
      {children}
    </svg>
    <span className="mt-[18px] text-[35px] leading-none">{label}</span>
  </div>
)

const BottomBar: FC = () => (
  <div className="mt-[7px] flex h-[136px] border-t-2 border-[#dadde0] bg-[#f7f8fa]">
    <div className="flex w-[276px] flex-col items-center">
      <Caret className="mt-[8px] h-[7px] w-[20px] rotate-180 text-[#777]" />
      <span className="mt-[14px] text-[42px] leading-[42px] tracking-[-1.6px] text-[#dd2c2c]">3306.02</span>
      <div className="mt-[9px] flex w-full items-center justify-between pr-[12px] pl-[40px] text-[36px] leading-[40px] text-[#666]">
        创业
        <span className="text-[39px] tracking-[-1px] text-[#dd2c2c]">0.32%</span>
      </div>
    </div>
    <Action label="交易">
      <path d="M17.5 9.5C27 3 42 3.5 51 13.5c8 9 9 18 5.5 30M56.5 44.5l7-4.500M51.500 54C43 60.500 29 61 19 53 7.500 43 3 32 9.500 18M9.500 18L1 21" />
      <path d="M24 20l9 10 9-10M33 30v18M23 31h20M23 40h20" strokeLinecap="butt" />
    </Action>
    <Action label="发帖">
      <path d="M44 7.5H15a8 8 0 0 0-8 8V51a8 8 0 0 0 8 8h36a8 8 0 0 0 8-8V24" />
      <path d="M24 43l2.5-7L48 15.5l3.5 3.5L31 39.5z" fill="currentColor" strokeWidth="1" />
      <path d="M55 11.500l1-1" strokeWidth="8" />
    </Action>
    <Action label="功能">
      <rect x="7.5" y="9" width="22" height="22" rx="3" />
      <rect x="7.5" y="36" width="22" height="22" rx="3" />
      <rect x="34.5" y="36" width="22" height="22" rx="3" />
      <rect x="37" y="11.5" width="17.5" height="17.5" rx="2.5" transform="rotate(45 45.75 20.25)" />
    </Action>
    <Action label="设自选">
      <circle cx="33" cy="32" r="27" />
      <g fill="currentColor" stroke="none">
        <circle cx="21" cy="32" r="3" />
        <circle cx="33" cy="32" r="3" />
        <circle cx="45" cy="32" r="3" />
      </g>
    </Action>
  </div>
)

const SystemNav: FC = () => (
  <div className="flex h-[116px] items-center gap-[178px] bg-[#fcfcfc] pl-[285px] text-[#888]">
    <svg viewBox="0 0 50 54" className="h-[54px] w-[50px]" fill="none" stroke="currentColor" strokeWidth="4" strokeLinejoin="round">
      <path d="M43 4v46L4 27z" />
    </svg>
    <svg viewBox="0 0 54 54" className="h-[54px] w-[54px]" fill="none" stroke="currentColor" strokeWidth="4">
      <circle cx="27" cy="27" r="23" />
    </svg>
    <svg viewBox="0 0 50 54" className="h-[54px] w-[50px]" fill="none" stroke="currentColor" strokeWidth="4">
      <rect x="4" y="6" width="41" height="42" rx="2" />
    </svg>
  </div>
)

const App = () => (
  <div className="flex h-[2340px] w-[1080px] flex-col overflow-hidden bg-white font-[Roboto,'Noto_Sans_CJK_SC',sans-serif]">
    <StatusBar />
    <Header />
    <Quote />
    <Notice />
    <Periods />
    <Minutes />
    <Averages />
    <div className="flex pl-[12px]">
      <Charts />
      <Chips />
    </div>
    <BottomBar />
    <SystemNav />
  </div>
)

export default App
